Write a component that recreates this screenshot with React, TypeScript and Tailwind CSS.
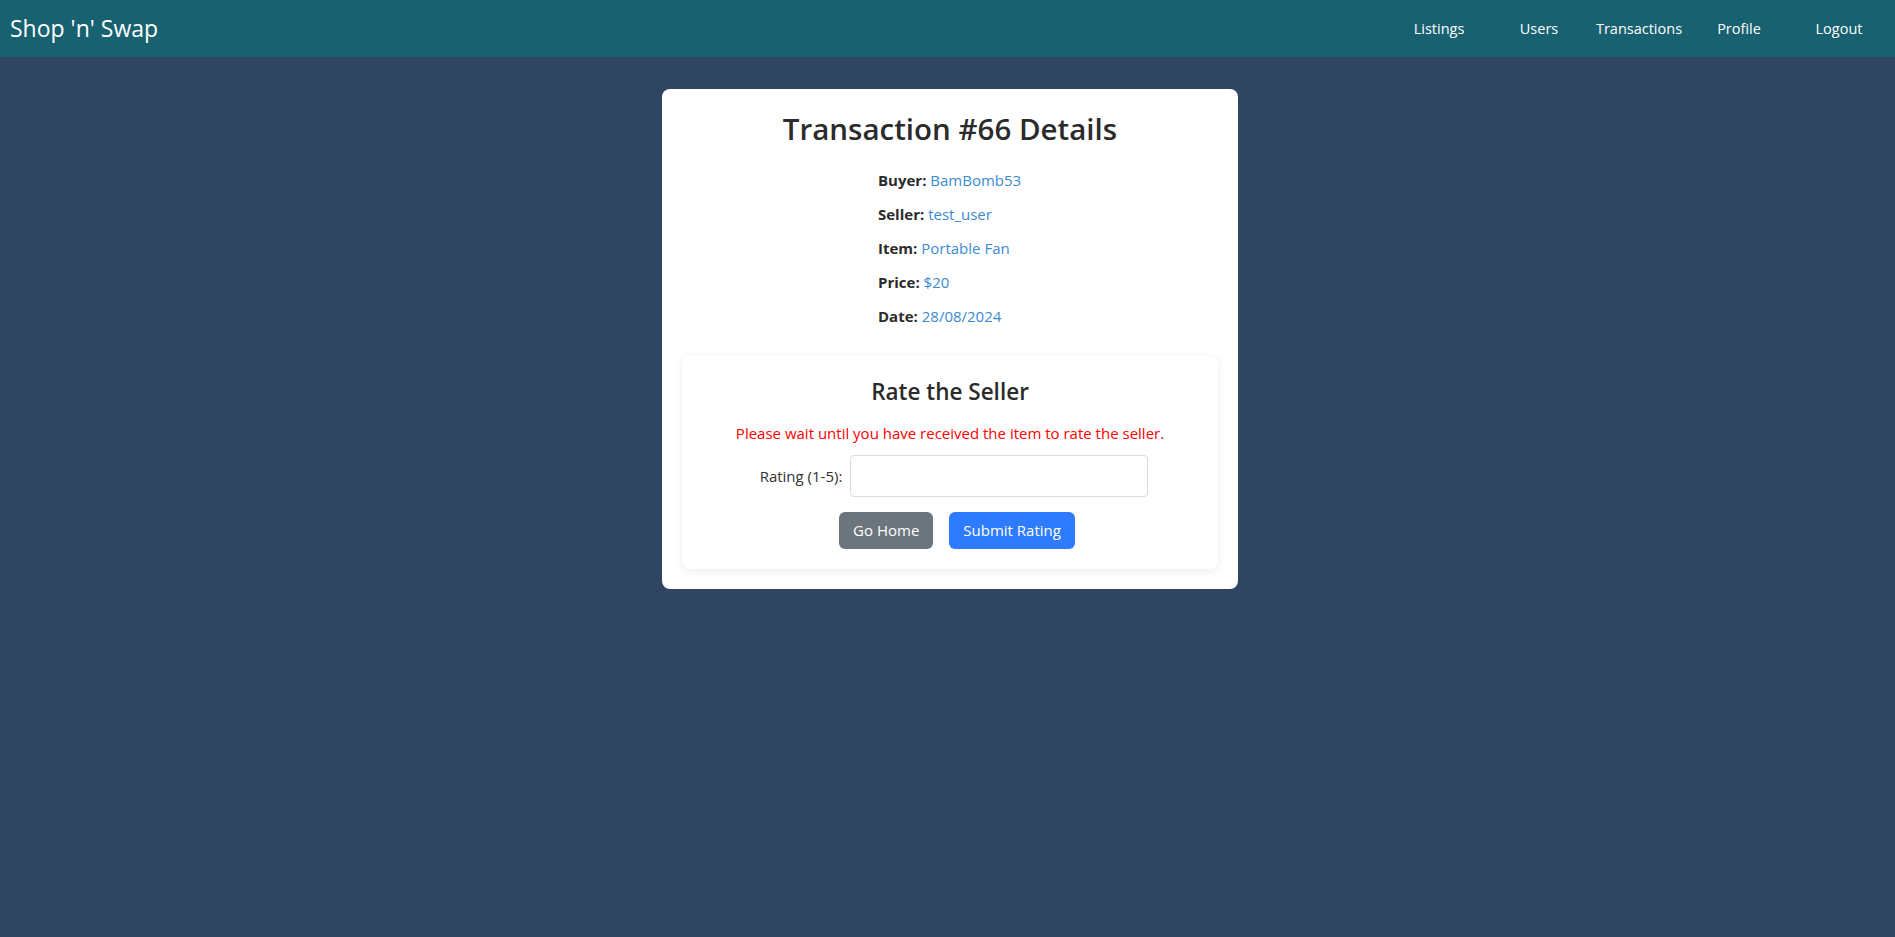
import { useState } from 'react';

const NAV_LINKS = ['Listings', 'Users', 'Transactions', 'Profile', 'Logout'];

const DETAILS = [
  { label: 'Buyer:', value: 'BamBomb53' },
  { label: 'Seller:', value: 'test_user' },
  { label: 'Item:', value: 'Portable Fan' },
  { label: 'Price:', value: '$20' },
  { label: 'Date:', value: '28/08/2024' },
];

function Navbar() {
  return (
    <nav className="flex h-[57px] items-center justify-between bg-[#176170] pl-[10px] pr-[6px] text-white">
      <a href="#" className="text-[23px] leading-none">
        Shop 'n' Swap
      </a>
      <ul className="flex">
        {NAV_LINKS.map((link) => (
          <li key={link} className="w-[100px] text-center text-[14.5px]">
            <a href="#">{link}</a>
          </li>
        ))}
      </ul>
    </nav>
  );
}

function RateSeller() {
  const [rating, setRating] = useState('');

  return (
    <div className="rounded-lg bg-white px-5 pt-5 pb-5 text-center shadow-[0_2px_8px_rgba(0,0,0,0.08)]">
      <h3 className="text-[22.5px] leading-8 font-semibold text-[#2b2b2b]">Rate the Seller</h3>
      <p className="mt-[13px] text-[15px] leading-6 text-[#ff0000]">
        Please wait until you have received the item to rate the seller.
      </p>
      <div className="mt-[10px] flex items-center justify-center gap-2 pl-[8px]">
        <label htmlFor="rating" className="text-[15px] text-[#333]">
          Rating (1-5):
        </label>
        <input
          id="rating"
          type="number"
          value={rating}
          onChange={(e) => setRating(e.target.value)}
          className="h-[42px] w-[298px] rounded border border-[#dcdcdc] px-2 outline-none"
        />
      </div>
      <div className="mt-[15px] flex justify-center gap-4 pl-[14px]">
        <button
          type="button"
          className="h-[37px] rounded-md bg-[#6c757d] px-[14px] text-[15px] text-white"
        >
          Go Home
        </button>
        <button
          type="button"
          className="h-[37px] rounded-md bg-[#2f7bff] px-[14px] text-[15px] text-white"
        >
          Submit Rating
        </button>
      </div>
    </div>
  );
}

export default function App() {
  return (
    <div className="min-h-[937px] bg-[#2f4562] font-['Open_Sans',sans-serif] text-[#333]">
      <Navbar />
      <main className="flex justify-center pt-[32px] pl-[5px]">
        <div className="w-[576px] rounded-lg bg-white px-5 pt-5 pb-5">
          <h2 className="text-center text-[29.5px] leading-10 font-semibold text-[#2b2b2b]">
            Transaction #66 Details
          </h2>
          <div className="mt-[19px] flex flex-col gap-[10px] pl-[196px] text-[15px] leading-6">
            {DETAILS.map((d) => (
              <p key={d.label}>
                <span className="font-bold text-[#2b2b2b]">{d.label}</span>{' '}
                <span className="text-[#3b8bd0]">{d.value}</span>
              </p>
            ))}
          </div>
          <div className="mt-[28px]">
            <RateSeller />
          </div>
        </div>
      </main>
    </div>
  );
}
